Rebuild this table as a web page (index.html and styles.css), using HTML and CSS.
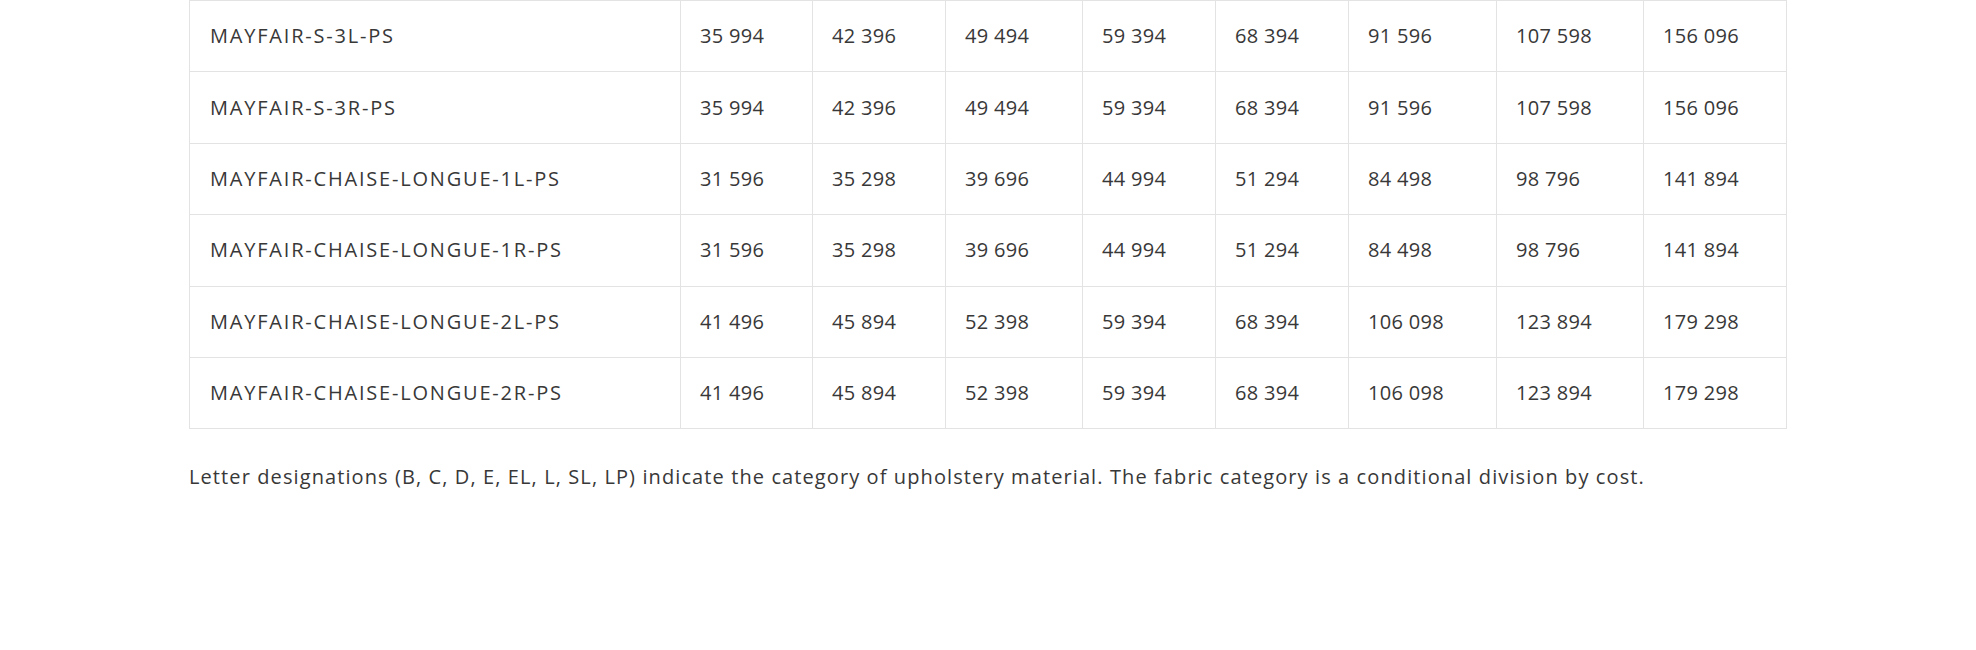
FILE: index.html
```
<!DOCTYPE html>
<html lang="en">
<head>
<meta charset="utf-8">
<title>Mayfair prices</title>
<link rel="stylesheet" href="styles.css">
</head>
<body>
<div class="wrap">
  <table class="prices">
    <colgroup>
      <col class="c-name">
      <col class="c1"><col class="c2"><col class="c3"><col class="c4"><col class="c5"><col class="c6"><col class="c7"><col class="c8">
    </colgroup>
    <tbody>
      <tr><td class="name">MAYFAIR-S-3L-PS</td><td>35 994</td><td>42 396</td><td>49 494</td><td>59 394</td><td>68 394</td><td>91 596</td><td>107 598</td><td>156 096</td></tr>
      <tr><td class="name">MAYFAIR-S-3R-PS</td><td>35 994</td><td>42 396</td><td>49 494</td><td>59 394</td><td>68 394</td><td>91 596</td><td>107 598</td><td>156 096</td></tr>
      <tr><td class="name">MAYFAIR-CHAISE-LONGUE-1L-PS</td><td>31 596</td><td>35 298</td><td>39 696</td><td>44 994</td><td>51 294</td><td>84 498</td><td>98 796</td><td>141 894</td></tr>
      <tr><td class="name">MAYFAIR-CHAISE-LONGUE-1R-PS</td><td>31 596</td><td>35 298</td><td>39 696</td><td>44 994</td><td>51 294</td><td>84 498</td><td>98 796</td><td>141 894</td></tr>
      <tr><td class="name">MAYFAIR-CHAISE-LONGUE-2L-PS</td><td>41 496</td><td>45 894</td><td>52 398</td><td>59 394</td><td>68 394</td><td>106 098</td><td>123 894</td><td>179 298</td></tr>
      <tr><td class="name">MAYFAIR-CHAISE-LONGUE-2R-PS</td><td>41 496</td><td>45 894</td><td>52 398</td><td>59 394</td><td>68 394</td><td>106 098</td><td>123 894</td><td>179 298</td></tr>
    </tbody>
  </table>
  <p class="note">Letter designations (B, C, D, E, EL, L, SL, LP) indicate the category of upholstery material. The fabric category is a conditional division by cost.</p>
</div>
</body>
</html>
```
FILE: styles.css
```
html, body {
  margin: 0;
  padding: 0;
  background: #ffffff;
}
body {
  font-family: "Open Sans", "Liberation Sans", sans-serif;
  color: #383838;
}
.wrap {
  padding-left: 189px;
  width: 1598px;
}
.prices {
  width: 1598px;
  border-collapse: collapse;
  table-layout: fixed;
}
.c-name { width: 491px; }
.c1 { width: 132px; }
.c2 { width: 133px; }
.c3 { width: 137px; }
.c4 { width: 133px; }
.c5 { width: 133px; }
.c6 { width: 148px; }
.c7 { width: 147px; }
.c8 { width: 143px; }
.prices td {
  border: 1px solid #e3e3e3;
  height: 71.4px;
  padding: 0 0 0 19px;
  font-size: 20px;
  line-height: 26px;
  vertical-align: middle;
  white-space: nowrap;
  box-sizing: border-box;
  letter-spacing: 0.3px;
}
.prices td.name {
  padding-left: 20px;
  letter-spacing: 1.8px;
}
.note {
  margin: 34px 0 0 0;
  font-size: 20px;
  line-height: 28px;
  letter-spacing: 1.1px;
}
```
